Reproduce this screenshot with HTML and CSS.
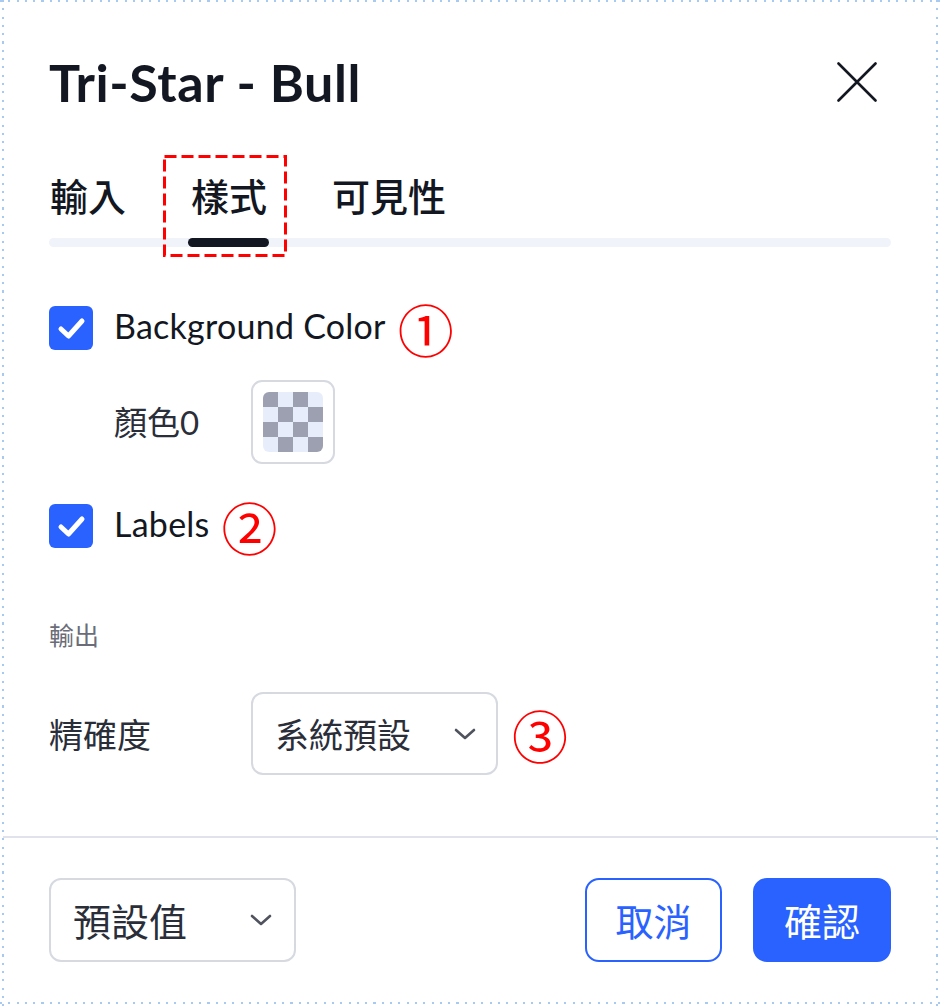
FILE: index.html
```html
<!DOCTYPE html>
<html lang="zh-Hant">
<head>
<meta charset="utf-8">
<title>Tri-Star - Bull</title>
<link rel="stylesheet" href="styles.css">
</head>
<body>
<div class="frame">
  <div class="dialog">
    <div class="main">
      <header class="header">
        <h1 class="title">Tri-Star - Bull</h1>
        <button class="close" aria-label="close">
          <svg width="40" height="40" viewBox="0 0 40 40"><path d="M1.5 1.5 L38.5 38.5 M38.5 1.5 L1.5 38.5" stroke="#131722" stroke-width="2.6" stroke-linecap="round" fill="none"/></svg>
        </button>
      </header>

      <nav class="tabbar">
        <div class="track"></div>
        <div class="tab-list">
          <div class="tab"><span class="tab-label">輸入</span><span class="tab-ind"></span></div>
          <div class="tab active"><span class="tab-label">樣式</span><span class="tab-ind"></span></div>
          <div class="tab"><span class="tab-label">可見性</span><span class="tab-ind"></span></div>
        </div>
      </nav>

      <section class="options">
        <div class="check-row">
          <span class="checkbox"><svg width="44" height="44" viewBox="0 0 44 44"><path d="M12 23 L19.5 30 L33 15" stroke="#fff" stroke-width="5" stroke-linecap="round" stroke-linejoin="round" fill="none"/></svg></span>
          <span class="label">Background Color</span>
          <span class="mark">①</span>
        </div>
        <div class="color-row">
          <span class="sub-label">顏色0</span>
          <span class="swatch"><span class="checker"></span></span>
        </div>
        <div class="check-row row-2">
          <span class="checkbox"><svg width="44" height="44" viewBox="0 0 44 44"><path d="M12 23 L19.5 30 L33 15" stroke="#fff" stroke-width="5" stroke-linecap="round" stroke-linejoin="round" fill="none"/></svg></span>
          <span class="label">Labels</span>
          <span class="mark">②</span>
        </div>

        <div class="group-title">輸出</div>

        <div class="field-row">
          <span class="field-label">精確度</span>
          <span class="select">
            <span class="select-text">系統預設</span>
            <svg class="chev" width="22" height="12" viewBox="0 0 22 12"><path d="M2 2 L11 10 L20 2" stroke="#50535e" stroke-width="2.6" stroke-linecap="round" stroke-linejoin="round" fill="none"/></svg>
          </span>
          <span class="mark mark-3">③</span>
        </div>
      </section>
    </div>

    <footer class="footer">
      <span class="select select-footer">
        <span class="select-text">預設值</span>
        <svg class="chev" width="22" height="12" viewBox="0 0 22 12"><path d="M2 2 L11 10 L20 2" stroke="#50535e" stroke-width="2.6" stroke-linecap="round" stroke-linejoin="round" fill="none"/></svg>
      </span>
      <div class="actions">
        <button class="btn btn-cancel">取消</button>
        <button class="btn btn-ok">確認</button>
      </div>
    </footer>
  </div>

  <svg class="annot-box" width="124" height="102" viewBox="0 0 124 102"><rect x="1.5" y="1.5" width="121" height="99" fill="none" stroke="#ff0000" stroke-width="3" stroke-dasharray="12 5"/></svg>
</div>
</body>
</html>
```

FILE: styles.css
```css
* { box-sizing: border-box; }

html, body {
  margin: 0;
  padding: 0;
  background: #ffffff;
}

body {
  font-family: Lato, "Noto Sans CJK TC", sans-serif;
  color: #131722;
}

.frame {
  position: relative;
  width: 940px;
  height: 1006px;
  background:
    repeating-linear-gradient(90deg, #a9caf0 0 2px, transparent 2px 8.3px) 0 0 / 100% 2px no-repeat,
    repeating-linear-gradient(90deg, #a9caf0 0 2px, transparent 2px 8.3px) 0 1002px / 100% 2px no-repeat,
    repeating-linear-gradient(180deg, #a9caf0 0 2px, transparent 2px 8.3px) 2px 0 / 2px 100% no-repeat,
    repeating-linear-gradient(180deg, #a9caf0 0 2px, transparent 2px 8.3px) 936px 0 / 2px 100% no-repeat,
    #ffffff;
}

.dialog {
  margin: 0 3px;
  height: 1002px;
  display: flex;
  flex-direction: column;
}

.main {
  flex: 1;
  padding: 0 46px;
}

/* header */
.header {
  margin-top: 52px;
  height: 60px;
  display: flex;
  align-items: center;
  justify-content: space-between;
}

.title {
  margin: 0;
  font-size: 52px;
  line-height: 60px;
  font-weight: 700;
  letter-spacing: 0.6px;
}

.close {
  width: 40px;
  height: 40px;
  margin-right: 14px;
  padding: 0;
  border: 0;
  background: none;
  display: flex;
}

/* tabs */
.tabbar {
  margin-top: 59px;
  display: grid;
}

.track {
  grid-area: 1 / 1;
  align-self: end;
  height: 9px;
  border-radius: 5px;
  background: #f0f3fa;
}

.tab-list {
  grid-area: 1 / 1;
  display: flex;
  gap: 64px;
}

.tab {
  display: flex;
  flex-direction: column;
  align-items: center;
  gap: 19px;
  font-family: "Noto Sans CJK TC", sans-serif;
  font-size: 38px;
  line-height: 48px;
  font-weight: 500;
  color: #131722;
}

.tab-label { padding-left: 1px; }

.tab-ind {
  align-self: stretch;
  height: 9px;
  margin: 0 -2px;
  border-radius: 5px;
}

.tab.active .tab-ind { background: #131722; }

/* options */
.options {
  margin-top: 59px;
}

.check-row {
  height: 44px;
  display: flex;
  align-items: center;
}

.row-2 { margin-top: 40px; }

.checkbox {
  width: 44px;
  height: 44px;
  border-radius: 6px;
  background: #2962ff;
  display: flex;
  flex: none;
}

.label {
  margin-left: 21px;
  font-size: 34px;
  line-height: 44px;
  letter-spacing: 0.25px;
  color: #131722;
  position: relative;
  top: -2px;
}

.mark {
  margin-left: 12px;
  font-family: "Noto Sans CJK JP", sans-serif;
  font-size: 56px;
  line-height: 44px;
  color: #ff0000;
}

.color-row {
  margin-top: 30px;
  padding-left: 65px;
  display: flex;
  align-items: center;
}

.sub-label {
  width: 137px;
  font-size: 33px;
  line-height: 44px;
  color: #2a2e39;
}

.swatch {
  width: 84px;
  height: 84px;
  padding: 10px;
  border: 2px solid #d6d9e0;
  border-radius: 11px;
  display: flex;
}

.checker {
  width: 60px;
  height: 60px;
  border-radius: 6px;
  background: repeating-conic-gradient(from 90deg, #9da0b1 0 25%, #e8edfb 0 50%) 0 0 / 30px 30px;
}

.group-title {
  margin-top: 71px;
  font-family: "Noto Sans CJK TC", sans-serif;
  font-size: 25px;
  line-height: 30px;
  color: #6a6d78;
}

.field-row {
  margin-top: 43px;
  display: flex;
  align-items: center;
}

.field-label {
  width: 202px;
  font-family: "Noto Sans CJK TC", sans-serif;
  font-size: 34px;
  line-height: 44px;
  color: #2a2e39;
}

.select {
  width: 247px;
  height: 83px;
  padding: 0 20px 0 22px;
  border: 2px solid #d6d9e0;
  border-radius: 12px;
  display: flex;
  align-items: center;
  justify-content: space-between;
  background: #fff;
}

.select-text {
  font-family: "Noto Sans CJK TC", sans-serif;
  font-size: 34px;
  line-height: 44px;
  color: #2a2e39;
}

.chev { flex: none; }

.mark-3 { margin-left: 14px; }

/* footer */
.footer {
  border-top: 2px solid #e0e3eb;
  padding: 40px 46px 40px;
  display: flex;
  align-items: center;
  justify-content: space-between;
}

.select-footer {
  height: 84px;
  padding-right: 22px;
}

.select-footer .select-text {
  font-size: 38px;
}

.actions {
  display: flex;
  gap: 31px;
}

.btn {
  height: 84px;
  border-radius: 14px;
  border: 2px solid #2962ff;
  font-family: "Noto Sans CJK TC", sans-serif;
  font-size: 38px;
  line-height: 44px;
  padding: 0;
  cursor: pointer;
}

.btn-cancel {
  width: 137px;
  background: #ffffff;
  color: #2962ff;
}

.btn-ok {
  width: 138px;
  background: #2962ff;
  color: #ffffff;
}

/* annotation overlay */
.annot-box {
  position: absolute;
  left: 163px;
  top: 155px;
}
```
